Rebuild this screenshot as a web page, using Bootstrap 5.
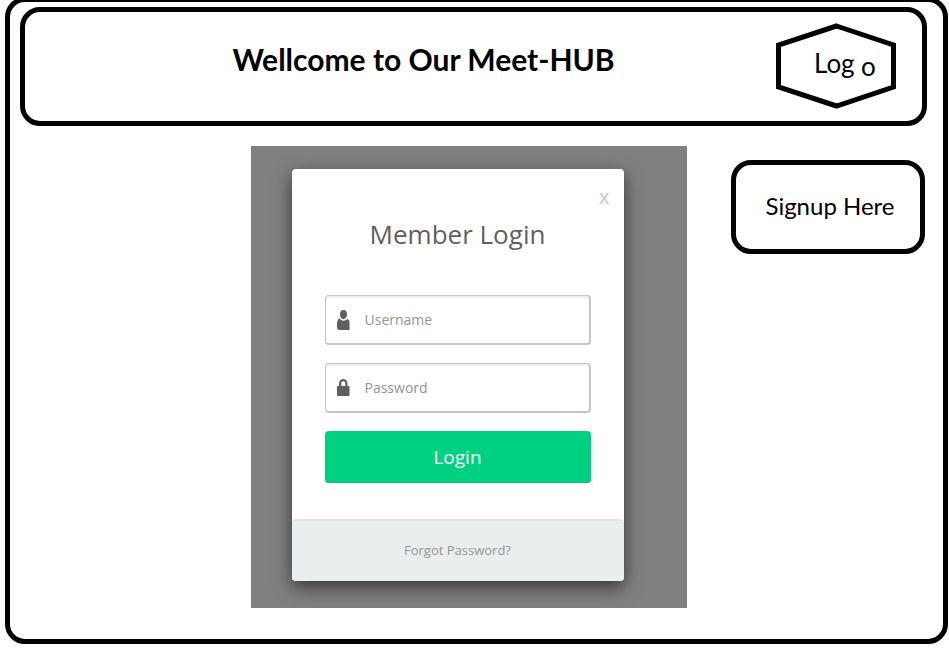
<!DOCTYPE html>
<html lang="en">
<head>
<meta charset="utf-8">
<meta name="viewport" content="width=device-width, initial-scale=1">
<title>Meet-HUB</title>
<link href="https://cdn.jsdelivr.net/npm/bootstrap@5.3.0/dist/css/bootstrap.min.css" rel="stylesheet">
<style>
  body { font-family: Lato, "Liberation Sans", sans-serif; color: #000; background: #fff; }
  .site-frame { min-height: 647px; margin: -3px 1px 4px 5px; border: 5px solid #000; border-radius: 20px; }
  .site-header { margin: 5px 16px 20px 10px; padding: 11px 26px 12px 46px; border: 5px solid #000; border-radius: 20px; }
  .site-title { font-size: 30px; line-height: 36px; padding-bottom: 14px; }
  .site-logo { width: 120px; height: 86px; font-size: 26px; }
  .site-main { padding-right: 16px; }
  .login-backdrop { width: 436px; padding: 23px 63px 27px 41px; background: #808080; }
  .login-card { border-radius: 4px; background: #fff; color: #5f5f5f; font-family: "Open Sans", "Noto Sans", sans-serif; box-shadow: 0 6px 18px rgba(0,0,0,.6); }
  .login-top { padding: 16px 14px 0; }
  .login-close { font-size: 20px; line-height: 24px; color: #c8c8c8; }
  .login-title { font-size: 26px; line-height: 40px; padding: 5px 0 41px; }
  .login-form { padding: 0 33px 36px; gap: 18px; }
  .field { height: 50px; padding: 0 10px; gap: 15px; border: 1px solid #c6c6c6; border-right-width: 2px; border-bottom-width: 2px; border-radius: 4px; box-shadow: inset 0 2px 2px rgba(0,0,0,.07); }
  .field:focus-within { border-color: #00d082; }
  .field input { font-size: 14px; line-height: 24px; outline: 0; color: #5f5f5f; }
  .field input::placeholder { color: #949494; opacity: 1; }
  .login-submit { height: 52px; border: 0; border-radius: 4px; background: #00d082; color: #fff; font-size: 19px; box-shadow: inset 0 -1px 0 #1bb87d; }
  .login-submit:hover { background: #00be77; color: #fff; }
  .login-foot { height: 62px; border-top: 2px solid #e0e5e5; border-radius: 4px; background: #eaeeef; font-size: 13px; }
  .login-foot a { color: #929696; }
  .signup-btn { width: 194px; height: 94px; margin: 14px 2px 0 0; padding: 0 0 2px 4px; border: 5px solid #000; border-radius: 20px; background: #fff; font-size: 24px; color: #000; }
</style>
</head>
<body>
<div class="site-frame">
  <header class="site-header d-flex align-items-center">
    <h1 class="site-title flex-grow-1 text-center fw-bold mb-0">Wellcome to Our Meet-HUB</h1>
    <svg class="site-logo flex-shrink-0" viewBox="0 0 120 86" role="img" aria-label="Logo">
      <path d="M60.500 3 117.500 22V64L60.500 83 2.500 64V22Z" fill="none" stroke="#000" stroke-width="5"/>
      <text x="38" y="50">Log</text>
      <text x="85" y="53">o</text>
    </svg>
  </header>
  <main class="site-main row g-0">
    <div class="col"></div>
    <section class="col-auto">
      <div class="login-backdrop">
        <div class="login-card">
          <div class="login-top d-flex justify-content-end">
            <button type="button" class="login-close border-0 bg-transparent p-0" aria-label="Close">x</button>
          </div>
          <h2 class="login-title text-center fw-normal mb-0">Member Login</h2>
          <form class="login-form d-flex flex-column">
            <label class="field d-flex align-items-center">
              <svg width="14" height="20" viewBox="0 0 14 20" fill="#5f5f5f" aria-hidden="true"><path d="M7.500 0C9.800 0 11 1.500 11 4.200 11 6.500 9.800 8.800 7.500 9.200 5.200 9 4 6.800 4 4.200 4 1.500 5.200 0 7.500 0ZM3.800 8.200C4.800 10 6 10.700 7.500 10.700S10.300 10 11.200 9C12.600 9.300 13.500 10.500 13.500 12V20H3.500C1.800 20 1 18.800 1 17V14C1 11 2 9 3.800 8.200Z"/></svg>
              <input type="text" class="flex-grow-1 border-0 bg-transparent p-0" placeholder="Username" aria-label="Username">
            </label>
            <label class="field d-flex align-items-center">
              <svg width="14" height="20" viewBox="0 0 14 20" fill="#5f5f5f" aria-hidden="true"><path fill-rule="evenodd" d="M3 8V5.500C3 3 4.800 1 7.200 1S11.500 3 11.500 5.500V8H12.500Q13.500 8 13.500 9V17Q13.500 18 12.500 18H2Q1 18 1 17V9Q1 8 2 8ZM5.300 8H9.300V5.500C9.300 4.200 8.500 3.300 7.300 3.300S5.300 4.200 5.300 5.500Z"/></svg>
              <input type="password" class="flex-grow-1 border-0 bg-transparent p-0" placeholder="Password" aria-label="Password">
            </label>
            <button type="submit" class="login-submit btn">Login</button>
          </form>
          <div class="login-foot d-flex align-items-center justify-content-center">
            <a href="#" class="text-decoration-none">Forgot Password?</a>
          </div>
        </div>
      </div>
    </section>
    <div class="col d-flex justify-content-end align-items-start">
      <button type="button" class="signup-btn">Signup Here</button>
    </div>
  </main>
</div>
<script src="https://cdn.jsdelivr.net/npm/bootstrap@5.3.0/dist/js/bootstrap.bundle.min.js"></script>
</body>
</html>
